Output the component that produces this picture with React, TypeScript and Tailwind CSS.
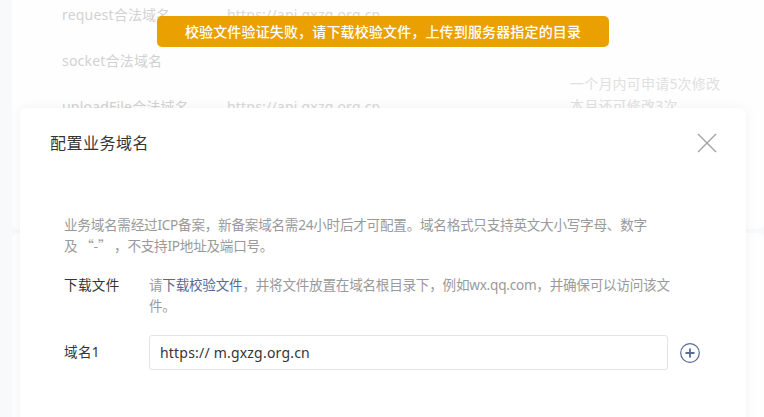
const FONT = { fontFamily: '"Noto Sans", "Noto Sans CJK SC", sans-serif' };
const CJK = { fontFamily: '"Noto Sans CJK SC", sans-serif' };

const bgRows = [
  { label: "request合法域名", value: "https://api.gxzg.org.cn" },
  { label: "socket合法域名", value: "" },
  { label: "uploadFile合法域名", value: "https://api.gxzg.org.cn" },
];

const PlusCircle = () => (
  <svg width="20" height="20" viewBox="0 0 20 20" fill="none">
    <circle cx="10" cy="10" r="9.3" stroke="#576b95" strokeWidth="1.2" />
    <path d="M10 5.5v9M5.5 10h9" stroke="#576b95" strokeWidth="1.8" />
  </svg>
);

const CloseIcon = () => (
  <svg width="20" height="20" viewBox="0 0 20 20" fill="none">
    <path d="M1 1l18 18M19 1L1 19" stroke="#a3a3a3" strokeWidth="1.4" />
  </svg>
);

const App = () => {
  return (
    <div
      className="relative w-[764px] h-[417px] overflow-hidden bg-[#f8f9fa]"
      style={FONT}
    >
      {/* page behind the mask */}
      <div className="ml-[12px] flex flex-col">
        <div className="relative h-[229px] bg-[#fefefe] rounded-b-[6px] pl-[50px] pt-[2px] text-[14px] tracking-[0.2px]">
          {bgRows.map((r, i) => (
            <div key={i} className="h-[46px] flex leading-[26px]">
              <div className="w-[165px] text-[#d2d2d2]">{r.label}</div>
              <div className="w-[343px] text-[#d8d8d8]">{r.value}</div>
              {i === 1 && (
                <div className="text-[#e0e0e0] leading-[22px] pt-[25px]">
                  一个月内可申请5次修改
                  <br />
                  本月还可修改3次
                </div>
              )}
            </div>
          ))}
        </div>
        <div className="mt-[4px] h-[200px] bg-[#fefefe] rounded-t-[6px]" />
      </div>

      {/* dialog */}
      <div className="absolute left-[20px] top-[108px] w-[726px] h-[340px] bg-white rounded-[6px] shadow-[0_0_12px_rgba(0,0,0,0.05)]">
        <div className="flex items-center justify-between pl-[30px] pr-[29px] pt-[24px]">
          <h2 className="text-[16px] leading-[22px] text-[#353535] tracking-[0.5px]">
            配置业务域名
          </h2>
          <CloseIcon />
        </div>

        <div className="pl-[44px] pt-[60px] text-[13.6px] tracking-[-0.25px]">
          <p className="leading-[21px] text-[#9a9a9a] whitespace-nowrap">
            业务域名需经过ICP备案，新备案域名需24小时后才可配置。域名格式只支持英文大小写字母、数字
            <br />
            及<span style={CJK}> “-” </span>，不支持IP地址及端口号。
          </p>

          <div className="flex mt-[18px] leading-[21px]">
            <div className="w-[85px] text-[#353535] tracking-[0.3px]">下载文件</div>
            <p className="text-[#9a9a9a] whitespace-nowrap">
              请<span className="text-[#576b95]">下载校验文件</span>
              ，并将文件放置在域名根目录下，例如wx.qq.com，并确保可以访问该文
              <br />
              件。
            </p>
          </div>

          <div className="flex items-center mt-[19px]">
            <div className="w-[85px] text-[#353535] tracking-[0.3px]">域名1</div>
            <div className="w-[519px] h-[35px] border border-[#e3e3e3] rounded-[3px] flex items-center px-[10px] text-[14px] text-[#353535] tracking-[0.2px]">
              https:// m.gxzg.org.cn
            </div>
            <div className="ml-[12px] flex items-center">
              <PlusCircle />
            </div>
          </div>
        </div>
      </div>

      {/* toast */}
      <div className="absolute left-[157px] top-[16px] w-[452px] h-[31px] rounded-[5px] bg-[#eaa000] flex items-center justify-center text-white text-[14px] tracking-[0.15px] font-medium">
        校验文件验证失败，请下载校验文件，上传到服务器指定的目录
      </div>
    </div>
  );
};

export default App;
